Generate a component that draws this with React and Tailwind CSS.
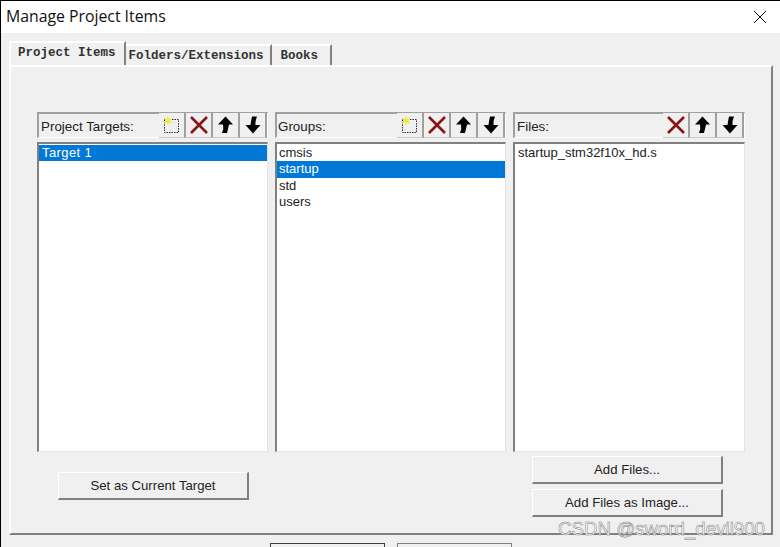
import React from 'react';

const NewIcon = () => (
    <svg width="20" height="20" viewBox="0 0 20 20">
        <rect x="2.5" y="4.5" width="14" height="13" fill="none" stroke="#333" strokeDasharray="1.5 1" />
        <path d="M6 1 L7 4 L10.5 3 L8.5 5.5 L10.5 8.5 L7 7.5 L6 10.5 L5 7.5 L1.5 8.5 L3.5 5.5 L1.5 3 L5 4 Z" fill="#f2ea3c" />
    </svg>
);

const DeleteIcon = () => (
    <svg width="20" height="20" viewBox="0 0 20 20">
        <path d="M2 2 L18 18 M18 2 L2 18" stroke="#8b1414" strokeWidth="2.6" fill="none" />
    </svg>
);

const UpIcon = () => (
    <svg width="20" height="20" viewBox="0 0 20 20">
        <path d="M9.5 1.5 L17 9.5 L13 9.5 Q12 14 11 18 L6 18 Q8 14 7 9.5 L2 9.5 Z" fill="#000" />
    </svg>
);

const DownIcon = () => (
    <svg width="20" height="20" viewBox="0 0 20 20">
        <path d="M10 18.5 L2.5 10 L7.5 10 Q8 6 9 1.5 L14 1.5 Q12 6 12.5 10 L17.5 10 Z" fill="#000" />
    </svg>
);

const ToolButton = ({ children }) => (
    <div className="w-[27px] h-[25px] flex items-center justify-center border-r-2 border-b border-r-[#a0a0a0] border-b-[#c8c8c8] bg-[#f0f0f0]">
        {children}
    </div>
);

const ListPanel = ({ title, width, tools, items, selected, titleClass = '', itemClass = '' }) => (
    <div className="flex flex-col" style={{ width }}>
        <div className="h-[26px] flex items-center justify-between border-t-2 border-l-2 border-[#a0a0a0] border-r border-r-white border-b border-b-white">
            <span className={`text-[13.4px] text-[#222] pl-[1px] pt-[4px] ${titleClass}`}>{title}</span>
            <div className="flex">
                {tools.map((Icon, i) => (
                    <ToolButton key={i}><Icon /></ToolButton>
                ))}
            </div>
        </div>
        <div className="mt-[4px] h-[310px] bg-white border-t-2 border-l-2 border-[#808080] border-r border-r-[#e4e4e4] border-b border-b-[#e4e4e4] pt-[1px] text-[13px] leading-[16.4px] text-[#222]">
            {items.map((item) => (
                <div key={item} className={item === selected ? `bg-[#0078d7] text-white pl-[2px] ${itemClass}` : `pl-[2px] ${itemClass}`}>
                    {item}
                </div>
            ))}
        </div>
    </div>
);

const Button = ({ children, className }) => (
    <button className={`h-[28px] w-[191px] text-[13.2px] text-[#222] bg-[#f0f0f0] border-t border-l border-t-white border-l-white border-r-2 border-b-2 border-r-[#808080] border-b-[#808080] ${className}`}>
        {children}
    </button>
);

export default function App() {
    return (
        <div className="relative w-[780px] h-[547px] overflow-hidden bg-[#f0f0f0] border-t border-l border-black font-['Liberation_Sans',sans-serif] flex flex-col">
            {/* Title bar */}
            <div className="h-[32px] shrink-0 bg-white flex items-center justify-between pl-[5px] pr-[13px]">
                <span className="text-[15.8px] text-[#111] font-['Open_Sans',sans-serif]">Manage Project Items</span>
                <svg width="14" height="14" viewBox="0 0 14 14">
                    <path d="M1 1 L13 13 M13 1 L1 13" stroke="#111" strokeWidth="1" fill="none" />
                </svg>
            </div>

            {/* Tabs */}
            <div className="ml-[8px] mt-[8px] flex shrink-0 text-[12.5px] font-bold text-[#333] font-['Liberation_Mono',monospace]">
                <div className="h-[24px] pl-[7px] pr-[8px] pt-[1px] border-t-2 border-l-2 border-t-white border-l-white border-r-2 border-r-[#808080]">Project Items</div>
                <div className="h-[21px] mt-[3px] pl-[3px] pr-[6px] pt-[1px] border-t-2 border-t-white border-r-2 border-r-[#808080]">Folders/Extensions</div>
                <div className="h-[21px] mt-[3px] pl-[9px] pr-[12px] pt-[1px] border-t-2 border-t-white border-r-2 border-r-[#808080]">Books</div>
            </div>

            {/* Tab page */}
            <div className="ml-[8px] w-[764px] h-[470px] shrink-0 border-t-2 border-l-2 border-t-white border-l-white border-r-2 border-b-2 border-r-[#808080] border-b-[#808080] pt-[45px] pl-[26px]">
                <div className="flex gap-[7px]">
                    <ListPanel title="Project Targets:" width="231px" tools={[NewIcon, DeleteIcon, UpIcon, DownIcon]} items={['Target 1']} selected="Target 1" titleClass="ml-[1px]" itemClass="tracking-[0.4px] indent-[1px]" />
                    <ListPanel title="Groups:" width="231px" tools={[NewIcon, DeleteIcon, UpIcon, DownIcon]} items={['cmsis', 'startup', 'std', 'users']} selected="startup" />
                    <ListPanel title="Files:" width="232px" tools={[DeleteIcon, UpIcon, DownIcon]} items={['startup_stm32f10x_hd.s']} titleClass="ml-[1px]" itemClass="indent-[1px]" />
                </div>
                <div className="flex justify-between pl-[21px] pr-[48px]">
                    <Button className="mt-[20px]">Set as Current Target</Button>
                    <div className="flex flex-col gap-[5px] mt-[4px]">
                        <Button>Add Files...</Button>
                        <Button>Add Files as Image...</Button>
                    </div>
                </div>
            </div>

            {/* Bottom buttons, cut off by the window edge */}
            <div className="flex gap-[12px] ml-[269px] mt-[8px]">
                <div className="w-[115px] h-[8px] border-t border-l border-r border-[#404040]" />
                <div className="w-[115px] h-[8px] border-t border-l border-r border-[#808080]" />
            </div>

            {/* Watermark */}
            <div className="absolute left-[557px] top-[517px] text-[18.7px] leading-[22px] text-white [-webkit-text-stroke:0.5px_#777] whitespace-nowrap">
                CSDN @sword_devil900
            </div>
        </div>
    );
}
